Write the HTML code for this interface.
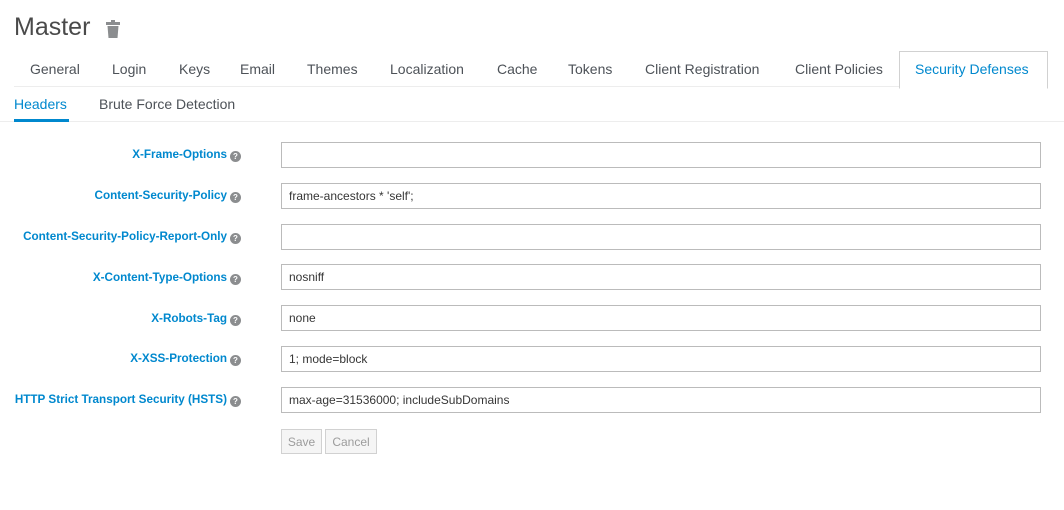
<!DOCTYPE html>
<html><head><style>
body{margin:0;width:1064px;height:510px;background:#fff;font-family:"Liberation Sans",sans-serif;color:#363636;position:relative;overflow:hidden}
.a{position:absolute;white-space:nowrap}
h1{position:absolute;left:14px;top:13px;margin:0;font-size:25px;font-weight:300;color:#4a4a4a}
.tab{position:absolute;top:61px;font-size:14px;color:#4d5258}
.lbl{position:absolute;right:823px;font-size:11.7px;font-weight:bold;color:#0088ce;white-space:nowrap}
.q{display:inline-block;width:11px;height:11px;border-radius:50%;background:#8b8d8f;color:#fff;font-size:8px;line-height:11px;text-align:center;margin-left:3px;vertical-align:-1px}
.in{position:absolute;left:281px;width:751px;height:24px;border:1px solid #bbb;font-size:12px;line-height:25px;padding-left:7px;color:#363636}
.btn{position:absolute;top:429px;height:23px;border:1px solid #d1d1d1;background:#f5f5f5;color:#9c9c9c;font-size:12px;line-height:24px;text-align:center}
</style></head><body>
<h1>Master</h1>
<svg class="a" style="left:106px;top:20px" width="14" height="18" viewBox="0 0 14 18"><rect x="0" y="2" width="14" height="3" fill="#8b8d8f"/><rect x="5" y="0" width="4" height="3" fill="#8b8d8f"/><path d="M1.5 6h11l-1 12h-9z" fill="#8b8d8f"/></svg>
<div class="a" style="left:14px;right:17px;top:86px;border-top:1px solid #ededed"></div>
<div class="a" style="left:899px;top:51px;width:147px;height:36px;border:1px solid #d1d1d1;border-bottom:1px solid #fff;background:#fff"></div>
<span class="tab" style="left:30px">General</span>
<span class="tab" style="left:112px">Login</span>
<span class="tab" style="left:179px">Keys</span>
<span class="tab" style="left:240px">Email</span>
<span class="tab" style="left:307px">Themes</span>
<span class="tab" style="left:390px">Localization</span>
<span class="tab" style="left:497px">Cache</span>
<span class="tab" style="left:568px">Tokens</span>
<span class="tab" style="left:645px">Client Registration</span>
<span class="tab" style="left:795px">Client Policies</span>
<span class="tab" style="left:915px;color:#0088ce">Security Defenses</span>
<div class="a" style="left:0;right:0;top:121px;border-top:1px solid #ededed"></div>
<span class="a" style="left:14px;top:96px;font-size:14px;color:#0088ce">Headers</span>
<div class="a" style="left:14px;top:119px;width:55px;height:3px;background:#0088ce"></div>
<span class="a" style="left:99px;top:96px;font-size:14px;color:#4d5258">Brute Force Detection</span>

<div class="lbl" style="top:148px">X-Frame-Options<span class="q">?</span></div>
<div class="in" style="top:142px"></div>
<div class="lbl" style="top:189px">Content-Security-Policy<span class="q">?</span></div>
<div class="in" style="top:183px">frame-ancestors * 'self';</div>
<div class="lbl" style="top:230px">Content-Security-Policy-Report-Only<span class="q">?</span></div>
<div class="in" style="top:224px"></div>
<div class="lbl" style="top:271px">X-Content-Type-Options<span class="q">?</span></div>
<div class="in" style="top:264px">nosniff</div>
<div class="lbl" style="top:312px">X-Robots-Tag<span class="q">?</span></div>
<div class="in" style="top:305px">none</div>
<div class="lbl" style="top:352px">X-XSS-Protection<span class="q">?</span></div>
<div class="in" style="top:346px">1; mode=block</div>
<div class="lbl" style="top:393px">HTTP Strict Transport Security (HSTS)<span class="q">?</span></div>
<div class="in" style="top:387px">max-age=31536000; includeSubDomains</div>
<div class="btn" style="left:281px;width:39px">Save</div>
<div class="btn" style="left:325px;width:50px">Cancel</div>
</body></html>
